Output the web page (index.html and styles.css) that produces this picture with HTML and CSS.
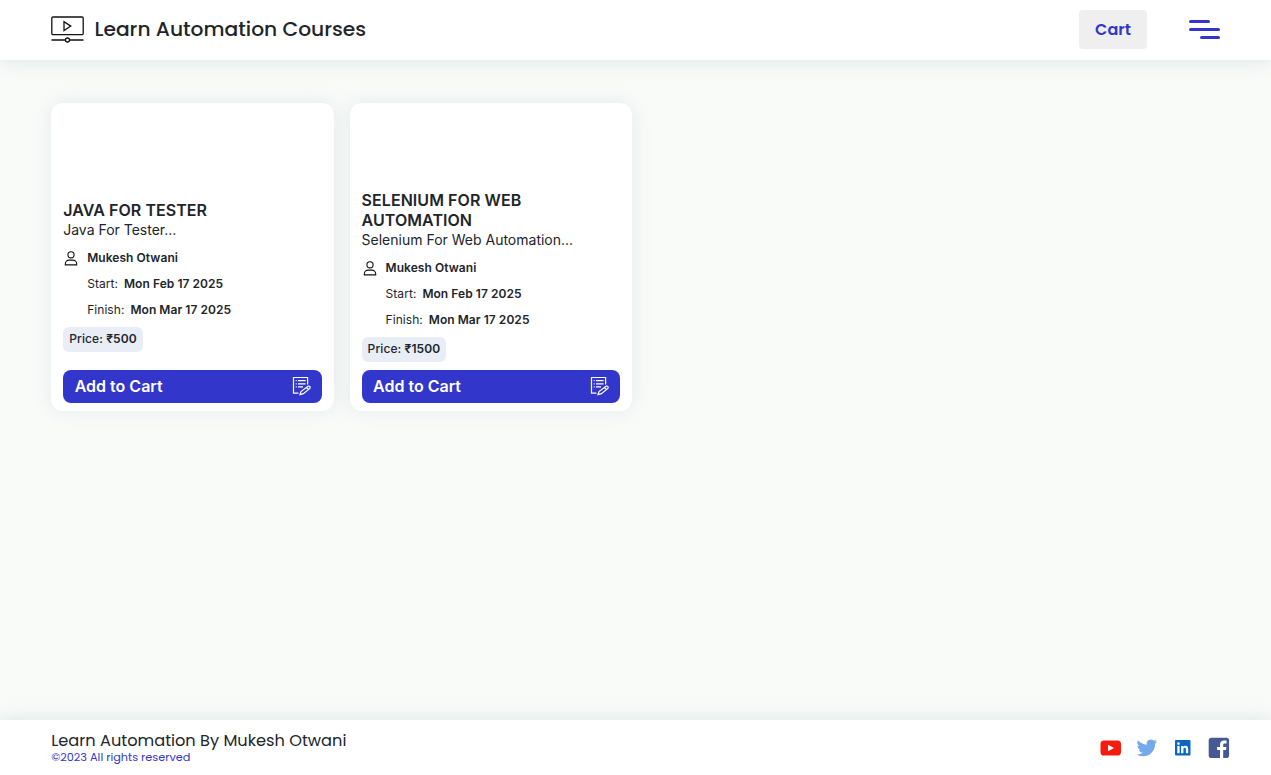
FILE: index.html
```html
<!DOCTYPE html>
<html lang="en">
<head>
<meta charset="utf-8">
<title>Learn Automation Courses</title>
<link rel="stylesheet" href="styles.css">
</head>
<body>
<svg class="symbols" aria-hidden="true">
  <symbol id="user" viewBox="0 0 14 16"><g fill="none" stroke="#111" stroke-width="1.1"><circle cx="7" cy="4.800" r="3.100"/><path d="M1.300 14.900v-1c0-2.100 1.800-3.800 4-3.800h3.400c2.200 0 4 1.700 4 3.800v1z"/></g></symbol>
  <symbol id="enroll" viewBox="0 0 20 20"><g fill="none" stroke="#fff" stroke-width="1.200"><path d="M15.600 8.500V1.500H1.500v15.600H6.500M3.700 4.700h1M6 4.700h7.600M3.700 7.800h1M6 7.800h7.600M3.700 10.900h1M6 10.900h5"/><path d="M8 18.600l1-3.100 7-5.200q1-.6 1.800.2t.1 1.900l-6.500 5.300zM14.500 11.500l1.900 2"/></g></symbol>
</svg>
<header class="header">
  <div class="brand">
    <svg class="brand-icon" viewBox="0 0 33 28" fill="none" stroke="#111" stroke-width="1.300"><rect x=".8" y="1" width="31.400" height="17.600" rx="1.200"/><path d="M13 5.600v9l6.800-4.500zM.5 24H14M19 24h13.500"/><circle cx="16.500" cy="24" r="2"/></svg>
    <h1 class="brand-name">Learn Automation Courses</h1>
  </div>
  <div class="actions">
    <button class="cart">Cart</button>
    <div class="menu"><span class="bar bar-short"></span><span class="bar"></span><span class="bar bar-short bar-end"></span></div>
  </div>
</header>
<main class="courses">
  <article class="card">
    <div class="info">
      <h2 class="title">JAVA FOR TESTER</h2>
      <p class="desc">Java For Tester...</p>
      <div class="meta author"><svg class="user"><use href="#user"/></svg><b>Mukesh Otwani</b></div>
      <div class="meta">Start: <b>Mon Feb 17 2025</b></div>
      <div class="meta">Finish: <b>Mon Mar 17 2025</b></div>
      <div class="price">Price: <b>₹500</b></div>
    </div>
    <button class="add"><span>Add to Cart</span><svg class="enroll"><use href="#enroll"/></svg></button>
  </article>
  <article class="card">
    <div class="info info-long">
      <h2 class="title">SELENIUM FOR WEB AUTOMATION</h2>
      <p class="desc">Selenium For Web Automation...</p>
      <div class="meta author"><svg class="user"><use href="#user"/></svg><b>Mukesh Otwani</b></div>
      <div class="meta">Start: <b>Mon Feb 17 2025</b></div>
      <div class="meta">Finish: <b>Mon Mar 17 2025</b></div>
      <div class="price">Price: <b>₹1500</b></div>
    </div>
    <button class="add"><span>Add to Cart</span><svg class="enroll"><use href="#enroll"/></svg></button>
  </article>
</main>
<footer class="footer">
  <div class="credit">
    <p class="owner">Learn Automation By Mukesh Otwani</p>
    <p class="rights">©2023 All rights reserved</p>
  </div>
  <div class="social">
    <svg class="social-icon" viewBox="0 0 24 24"><rect x="1.500" y="4.500" width="20.500" height="15" rx="3.600" fill="#f61c0d"/><path d="M9 8.800v6.400l6-3.200z" fill="#fff"/></svg>
    <svg class="social-icon" viewBox="0 0 24 24"><path transform="translate(1.600 1.600) scale(.86)" fill="#76a9ea" d="M23.950 4.570a10 10 0 0 1-2.820.77 4.960 4.960 0 0 0 2.160-2.720c-.95.550-2 .950-3.120 1.180a4.920 4.920 0 0 0-8.390 4.480C7.690 8.100 4.070 6.130 1.640 3.160a4.920 4.920 0 0 0 1.520 6.570 4.900 4.900 0 0 1-2.230-.61v.06a4.920 4.920 0 0 0 3.950 4.830 5 5 0 0 1-2.210.08 4.940 4.940 0 0 0 4.600 3.420A9.870 9.870 0 0 1 0 19.540a14 14 0 0 0 7.550 2.210c9.050 0 14-7.500 14-13.980l-.02-.64a9.900 9.900 0 0 0 2.420-2.560z"/></svg>
    <svg class="social-icon" viewBox="0 0 24 24"><rect x="4" y="4" width="15.500" height="15.500" rx="1" fill="#0a66c2"/><path fill="#fff" d="M6.300 9.900h2.300v7.300H6.300z"/><circle cx="7.450" cy="7.600" r="1.300" fill="#fff"/><path fill="#fff" d="M10.100 9.900h2.200v1c.4-.7 1.200-1.200 2.200-1.200 2.300 0 2.700 1.500 2.700 3.500v4h-2.300v-3.600c0-.9 0-1.900-1.200-1.900s-1.300.9-1.300 1.800v3.700h-2.300z"/></svg>
    <svg class="social-icon" viewBox="0 0 24 24"><rect x="1.700" y="1.700" width="20.400" height="20.400" rx="2.800" fill="#475993"/><path fill="#fff" d="M13 22v-7.900h-2.900v-3H13V8.700c0-2.800 1.700-4.200 4.100-4.200l2.400.1v2.800h-1.700c-1.400 0-1.600.7-1.600 1.700v2h3.200l-.4 3h-2.800V22z"/></svg>
  </div>
</footer>
</body>
</html>
```
FILE: styles.css
```css
* { box-sizing: border-box; }
body { margin: 0; height: 775px; display: flex; flex-direction: column; overflow: hidden; background: #f9fbf9; color: #212529; font-family: Inter, "Noto Sans", sans-serif; }
h1, h2, p { margin: 0; }
button { border: 0; font-family: inherit; }
.symbols { display: none; }
.header { height: 60px; flex: none; display: flex; align-items: center; justify-content: space-between; padding: 0 51px 1px; background: #fff; box-shadow: 0 0 20px rgba(189, 203, 207, .5); }
.brand { display: flex; align-items: center; gap: 10.400px; }
.brand-icon { width: 33px; height: 28px; }
.brand-name { font: 500 20.250px/30px Poppins, Inter, sans-serif; white-space: nowrap; margin-top: -1px; }
.actions { display: flex; align-items: center; gap: 42px; }
.cart { width: 68px; height: 39px; border-radius: 4px; padding: 0; background: #efefef; color: #3236cb; font: 600 16px/24px Poppins, Inter, sans-serif; }
.menu { width: 31px; display: flex; flex-direction: column; gap: 5px; }
.bar { height: 3px; border-radius: 2px; background: #3236cb; }
.bar-short { width: 20.500px; }
.bar-end { align-self: flex-end; }
.courses { flex: 1; display: flex; align-items: flex-start; gap: 16px; padding: 43px 51.200px; }
.card { width: 282.400px; height: 308px; display: flex; flex-direction: column; justify-content: space-between; padding: 0 12px 8px; border-radius: 12px; background: #fff; box-shadow: 0 0 20px rgba(189, 203, 207, .35); }
.info { padding-top: 97px; }
.info-long { padding-top: 86.800px; }
.title { font-size: 16px; line-height: 20px; font-weight: 600; letter-spacing: .06px; }
.desc { font-size: 14px; line-height: 20px; margin-bottom: 5px; font-weight: 400; white-space: nowrap; }
.meta { height: 25.800px; padding-left: 24px; display: flex; align-items: center; gap: 6px; font-size: 12px; letter-spacing: .05px; white-space: nowrap; }
.meta b, .price b { font-weight: 600; }
.author { padding-left: 1px; gap: 9px; }
.user { width: 14px; height: 16px; }
.price { width: fit-content; height: 25px; margin-top: 5px; padding: 0 6px; border-radius: 6px; background: #e8edf6; font-size: 12px; line-height: 24px; font-weight: 500; letter-spacing: .1px; }
.add { height: 33.500px; flex: none; display: flex; align-items: center; justify-content: space-between; padding: 0 10px 0 11.500px; border-radius: 8px; background: #3236cb; color: #fff; font-size: 16px; font-weight: 600; }
.enroll { width: 20px; height: 20px; }
.footer { height: 55px; flex: none; display: flex; align-items: center; justify-content: space-between; padding: 0 40px 0 51.300px; background: #fff; box-shadow: 0 0 20px rgba(189, 203, 207, .5); }
.credit { padding-top: 3px; }
.owner { font: 400 16.200px/17px Poppins, Inter, sans-serif; white-space: nowrap; }
.rights { font: 400 11.300px/17px Poppins, Inter, sans-serif; color: #3236cb; }
.social { display: flex; gap: 12px; margin-top: 1px; }
.social-icon { width: 24px; height: 24px; }
```
